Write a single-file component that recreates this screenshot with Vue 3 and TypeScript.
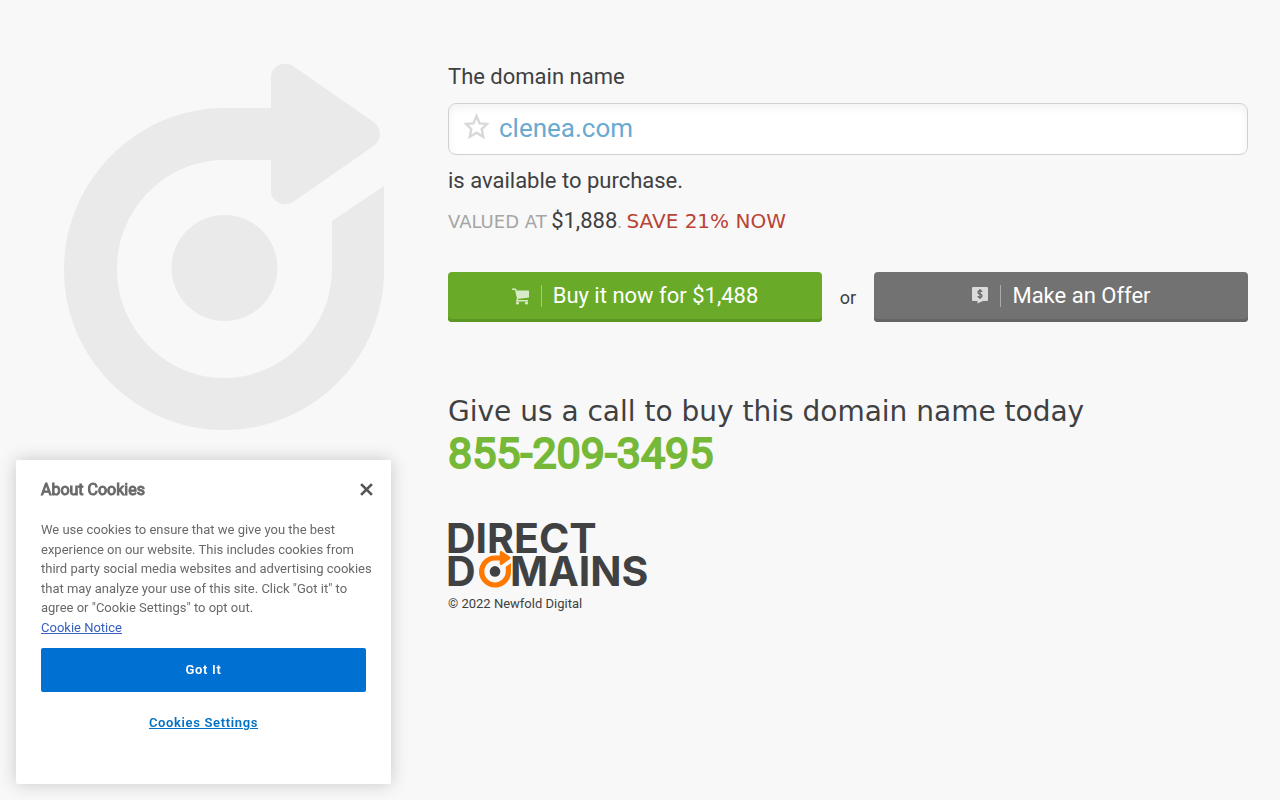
<script setup lang="ts">
import { ref } from 'vue'

const domain: string = 'clenea.com'
const phone: string = '855-209-3495'
const showCookies = ref<boolean>(true)
</script>

<template>
  <div class="page">
    <aside class="brand">
      <svg class="watermark" viewBox="0 0 320 366" aria-hidden="true">
        <path d="M207 44V13C207 3 219 -4 229 2L311 59Q321 70 311 81L229 138C219 144 207 137 207 128V96H160C101 96 53 146 53 205S101 314 160 314S268 264 268 205V157L320 122V207C320 295 248 366 160 366S0 294 0 206S72 44 160 44Z" />
        <circle cx="160.500" cy="204" r="53" />
      </svg>
    </aside>

    <main class="content">
      <h1 class="lead">
        <span>The domain name</span>
        <span class="domain">
          <svg class="star" viewBox="0 0 26 26" aria-hidden="true">
            <path d="M13 3L16 10L23 10.500L18 15.500L19.500 23L13 19L6.500 23L8 15.500L3 10.500L10 10Z" />
          </svg>
          <span>{{ domain }}</span>
        </span>
        <span>is available to purchase.</span>
      </h1>
      <p class="value"><span>VALUED AT</span> <strong>$1,888</strong>. <em>SAVE 21% NOW</em></p>

      <div class="actions">
        <button type="button" class="action buy">
          <svg class="icon" viewBox="0 0 18 18" aria-hidden="true">
            <path d="M0 1.500H4L4.500 3.500H17V10.500L5.500 12L6 13H16V14.500H4.500L4 13L5 11.500L3 3H0Z" />
            <circle cx="5.500" cy="16" r="1.600" /><circle cx="14.500" cy="16" r="1.600" />
          </svg>
          <span class="label">Buy it now for $1,488</span>
        </button>
        <span class="or">or</span>
        <button type="button" class="action offer">
          <svg class="icon" viewBox="0 0 18 18" aria-hidden="true">
            <path d="M2 0H16Q17 0 17 1V13Q17 14 16 14H12L6.500 16.500V14H2Q1 14 1 13V1Q1 0 2 0Z" />
            <path class="dollar" d="M11 5Q11 3.500 9 3.500T7 5.200T9 7T11 8.800T9 10.500T7 9M9 2V12" />
          </svg>
          <span class="label">Make an Offer</span>
        </button>
      </div>

      <section class="call">
        <h2>Give us a call to buy this domain name today</h2>
        <a :href="'tel:' + phone">{{ phone }}</a>
      </section>

      <footer>
        <svg class="logo" viewBox="0 0 202 66" role="img" aria-label="Direct Domains">
          <text x="-2" y="30">DIRECT</text>
          <text x="-2" y="63">D</text>
          <text x="62" y="63">MAINS</text>
          <circle class="halo" cx="47" cy="48" r="17" />
          <g transform="translate(31 28) scale(.1 .1)">
            <path class="halo-arrow" d="M207 44V13C207 3 219 -4 229 2L310 58Q320 69 310 81L229 138C219 144 207 137 207 128V96Z" />
            <path class="orange" d="M207 44V13C207 3 219 -4 229 2L310 58Q320 69 310 81L229 138C219 144 207 137 207 128V96H160C101 96 53 146 53 205S101 314 160 314S268 264 268 205V157L320 122V207C320 295 248 366 160 366S0 294 0 206S72 44 160 44Z" />
            <circle cx="160" cy="204" r="53" />
          </g>
        </svg>
        <p>© 2022 Newfold Digital</p>
      </footer>
    </main>

    <section v-if="showCookies" class="cookies" role="dialog" aria-labelledby="cookie-title">
      <header>
        <h2 id="cookie-title">About Cookies</h2>
        <button type="button" class="close" aria-label="Close" @click="showCookies = false">
          <svg viewBox="0 0 12 12" aria-hidden="true"><path d="M1 1L11 11M11 1L1 11" /></svg>
        </button>
      </header>
      <p>
        We use cookies to ensure that we give you the best experience on our website. This includes cookies from third
        party social media websites and advertising cookies that may analyze your use of this site. Click "Got it" to
        agree or "Cookie Settings" to opt out.<br />
        <a href="#cookie-notice">Cookie Notice</a>
      </p>
      <button type="button" class="accept" @click="showCookies = false">Got It</button>
      <button type="button" class="settings">Cookies Settings</button>
    </section>
  </div>
</template>

<style>
body {
  margin: 0;
  background: #f8f8f8;
}
</style>

<style scoped>
* {
  box-sizing: border-box;
}
.page {
  display: grid;
  grid-template-columns: 35% 1fr;
  min-height: 100vh;
  color: #3f4041;
  background: #f8f8f8;
  font-family: Roboto, "Liberation Sans", sans-serif;
}
button {
  border: 0;
  font-family: inherit;
  cursor: pointer;
}
h1,
h2,
p {
  margin: 0;
  font-weight: 400;
}
.brand {
  padding: 64px;
}
.watermark {
  display: block;
  width: 100%;
  overflow: visible;
  fill: #eaeaea;
}
.content {
  padding: 61px 32px 32px 0;
}
.lead {
  display: flex;
  flex-direction: column;
  font-size: 22px;
  line-height: 32px;
}
.domain {
  display: flex;
  align-items: center;
  gap: 9px;
  height: 52px;
  margin: 10px 0;
  padding: 0 14px 2px;
  border: 1px solid #d0d2d2;
  border-radius: 8px;
  background: #fff;
  box-shadow: inset 0 4px 8px #f2f2f2;
  color: #6aa9d0;
  font-size: 26px;
}
.star {
  width: 27px;
  height: 27px;
  margin-bottom: 4px;
  fill: none;
  stroke: #d8d8d8;
  stroke-width: 2.300;
}
.value {
  margin-top: 8px;
  color: #a5a5a5;
  font-size: 18px;
  line-height: 32px;
}
.value span,
.value em {
  font-family: "DejaVu Sans", sans-serif;
}
.value strong {
  color: #3f4041;
  font-size: 22px;
  font-weight: 400;
}
.value em {
  color: #b94335;
  font-size: 20px;
  font-style: normal;
}
.actions {
  display: grid;
  grid-template-columns: 1fr 52px 1fr;
  align-items: center;
  margin-top: 34px;
}
.action {
  display: flex;
  align-items: center;
  justify-content: center;
  gap: 11px;
  height: 50px;
  padding: 0 0 2px;
  border-radius: 4px;
  color: #fff;
  font-size: 22px;
}
.buy {
  background: #69ab28;
  box-shadow: inset 0 -3px #5b9722;
}
.offer {
  background: #727272;
  box-shadow: inset 0 -3px #656565;
}
.icon {
  width: 18px;
  height: 18px;
  fill: #fff;
  opacity: 0.75;
}
.dollar {
  fill: none;
  stroke: #555;
  stroke-width: 1.200;
}
.label {
  padding-left: 11px;
  border-left: 1px solid rgb(255 255 255 / 40%);
  line-height: 22px;
}
.or {
  text-align: center;
  font-size: 18px;
}
.call {
  margin-top: 72px;
}
.call h2 {
  font-family: "DejaVu Sans", sans-serif;
  font-size: 28px;
  line-height: 36px;
}
.call a {
  display: block;
  color: #76b837;
  font-size: 43px;
  line-height: 46px;
  text-decoration: none;
  -webkit-text-stroke: 2px #76b837;
}
footer {
  margin-top: 47px;
}
.logo {
  display: block;
  width: 202px;
  height: 66px;
  overflow: visible;
  fill: #404142;
  font-family: Inter, sans-serif;
  font-size: 41px;
  font-weight: 700;
}
.halo {
  fill: #f8f8f8;
}
.halo-arrow {
  stroke: #f8f8f8;
  stroke-width: 30;
}
.orange {
  fill: #ff7900;
}
footer p {
  margin-top: 5px;
  font-size: 13px;
  line-height: 20px;
}
.cookies {
  position: fixed;
  left: 16px;
  bottom: 16px;
  width: 375px;
  min-height: 324px;
  padding: 19px 18px 20px 25px;
  border-radius: 2px;
  background: #fff;
  box-shadow: 0 0 18px rgb(0 0 0 / 20%);
  color: #696969;
}
.cookies header {
  display: flex;
  align-items: center;
  justify-content: space-between;
  height: 21px;
}
.cookies h2 {
  font-size: 16px;
  line-height: 21px;
  -webkit-text-stroke: 1px #696969;
}
.close {
  display: flex;
  padding: 0;
  background: none;
}
.close svg {
  width: 13px;
  height: 13px;
  stroke: #565656;
  stroke-width: 2.500;
  overflow: visible;
}
.cookies p {
  margin-top: 20px;
  font-size: 13px;
  line-height: 1.5;
}
.cookies p a {
  color: #3860be;
}
.accept,
.settings {
  display: block;
  width: 325px;
  font-size: 13px;
  font-weight: 600;
  letter-spacing: 0.05em;
}
.accept {
  height: 44px;
  margin-top: 11px;
  padding-bottom: 2px;
  border-radius: 2px;
  background: #0071d3;
  color: #fff;
}
.settings {
  height: 40px;
  margin-top: 10px;
  background: none;
  color: #0071c5;
  text-decoration: underline;
}
</style>
